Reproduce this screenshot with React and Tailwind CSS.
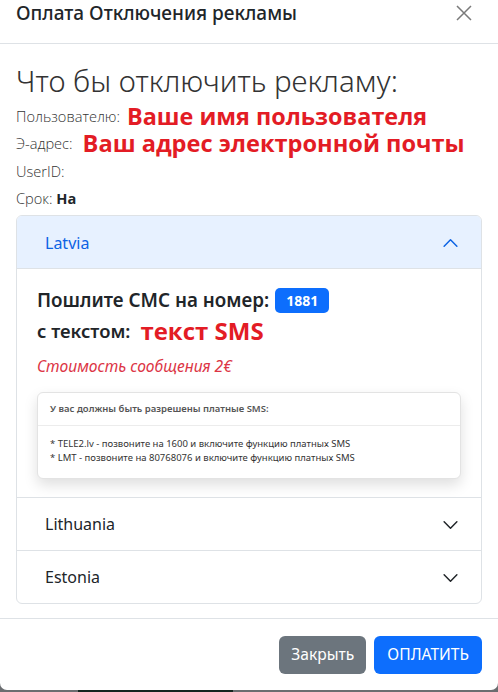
import React from 'react';

const Chevron = ({ up, className }) => (
  <svg viewBox="0 0 16 16" className={className} fill="none" stroke="currentColor" strokeWidth="1.4" strokeLinecap="round" strokeLinejoin="round">
    {up ? <path d="M2 11.5 8 5.5l6 6" /> : <path d="M2 5.5l6 6 6-6" />}
  </svg>
);

function CountryRow({ name }) {
  return (
    <div className="flex h-[53px] items-center justify-between border-t border-[#dee2e6] pl-[28px] pr-[22px]">
      <span className="text-[16px] text-[#212529]">{name}</span>
      <Chevron className="h-[17px] w-[17px] text-[#212529]" />
    </div>
  );
}

export default function App() {
  return (
    <div className="flex h-[692px] w-[498px] flex-col bg-[#6a6d70] font-['Noto_Sans',sans-serif]">
      <div className="flex h-[690px] flex-col rounded-b-[7px] bg-white">
        {/* header */}
        <div className="flex h-[44px] items-start justify-between border-b border-[#dee2e6] pl-[16px] pr-[26px]">
          <h5 className="mt-[-2px] text-[19px] font-medium leading-[30px] text-[#212529]">Оплата Отключения рекламы</h5>
          <svg viewBox="0 0 16 16" className="mt-[5px] h-[16px] w-[16px] text-[#7a7a7a]" fill="none" stroke="currentColor" strokeWidth="1.5">
            <path d="M1 1l14 14M15 1 1 15" />
          </svg>
        </div>

        {/* body */}
        <div className="flex flex-1 flex-col px-[16px] pt-[18px]">
          <h1 className="text-[29.6px] font-light leading-[38px] text-[#333]">Что бы отключить рекламу:</h1>
          <div className="mt-[3px] flex h-[27.5px] items-center gap-[7px] font-['Open_Sans',sans-serif]">
            <span className="text-[14.6px] font-light text-[#333]">Пользователю:</span>
            <span className="text-[23.4px] font-bold leading-none text-[#e31c25]">Ваше имя пользователя</span>
          </div>
          <div className="flex h-[27.5px] items-center gap-[10px] font-['Open_Sans',sans-serif]">
            <span className="text-[14.6px] font-light text-[#333]">Э-адрес:</span>
            <span className="text-[23.6px] font-bold leading-none text-[#e31c25]">Ваш адрес электронной почты</span>
          </div>
          <div className="flex h-[27.5px] items-center text-[14.6px] font-light text-[#333] font-['Open_Sans',sans-serif]">UserID:</div>
          <div className="flex h-[27.5px] items-center text-[14.6px] text-[#333] font-['Open_Sans',sans-serif]">
            <span className="font-light">Срок:&nbsp;</span>
            <b className="font-bold text-[#212529]">На</b>
          </div>

          {/* accordion */}
          <div className="mt-[2px] overflow-hidden rounded-[6px] border border-[#dee2e6]">
            <div className="flex h-[53px] items-center justify-between bg-[#e7f1ff] pl-[28px] pr-[22px] shadow-[inset_0_-1px_0_#dee2e6]">
              <span className="text-[16px] text-[#0c63e4]">Latvia</span>
              <Chevron up className="h-[17px] w-[17px] text-[#0c63e4]" />
            </div>
            <div className="px-[20px] pb-[18px] pt-[17px]">
              <div className="flex items-center gap-[6px]">
                <span className="text-[18.8px] font-semibold text-[#212529]">Пошлите СМС на номер:</span>
                <span className="rounded-[5px] bg-[#0d6efd] px-[11px] py-[2px] text-[14px] font-bold text-white">1881</span>
              </div>
              <div className="mt-[3px] flex items-center gap-[10px]">
                <span className="text-[18.4px] font-semibold text-[#212529]">с текстом:</span>
                <span className="font-['Open_Sans',sans-serif] text-[24px] font-bold leading-none text-[#e31c25]">текст SMS</span>
              </div>
              <div className="mt-[10px] text-[15.6px] italic text-[#dc3545]">Стоимость сообщения 2€</div>
              <div className="mt-[14px] rounded-[6px] border border-[#e3e3e3] bg-white shadow-[0_6px_14px_rgba(0,0,0,0.13)]">
                <div className="border-b border-[#ececec] px-[12px] py-[9px] text-[9.5px] font-semibold text-[#555]">У вас должны быть разрешены платные SMS:</div>
                <div className="px-[12px] pb-[13px] pt-[11px] text-[9.5px] leading-[14px] text-[#333]">
                  <div>* TELE2.lv - позвоните на 1600 и включите функцию платных SMS</div>
                  <div>* LMT - позвоните на 80768076 и включите функцию платных SMS</div>
                </div>
              </div>
            </div>
            <CountryRow name="Lithuania" />
            <CountryRow name="Estonia" />
          </div>
        </div>

        {/* footer */}
        <div className="flex h-[72px] items-center justify-end gap-[8px] border-t border-[#dee2e6] px-[16px]">
          <button className="h-[38px] rounded-[6px] bg-[#6c757d] px-[12px] text-[15.6px] text-white">Закрыть</button>
          <button className="h-[38px] rounded-[6px] bg-[#0d6efd] px-[13px] text-[15.6px] text-white">ОПЛАТИТЬ</button>
        </div>
      </div>
      <div className="flex h-[2px]">
        <div className="w-[78px]" />
        <div className="w-[155px] bg-[#14261f]" />
      </div>
    </div>
  );
}
